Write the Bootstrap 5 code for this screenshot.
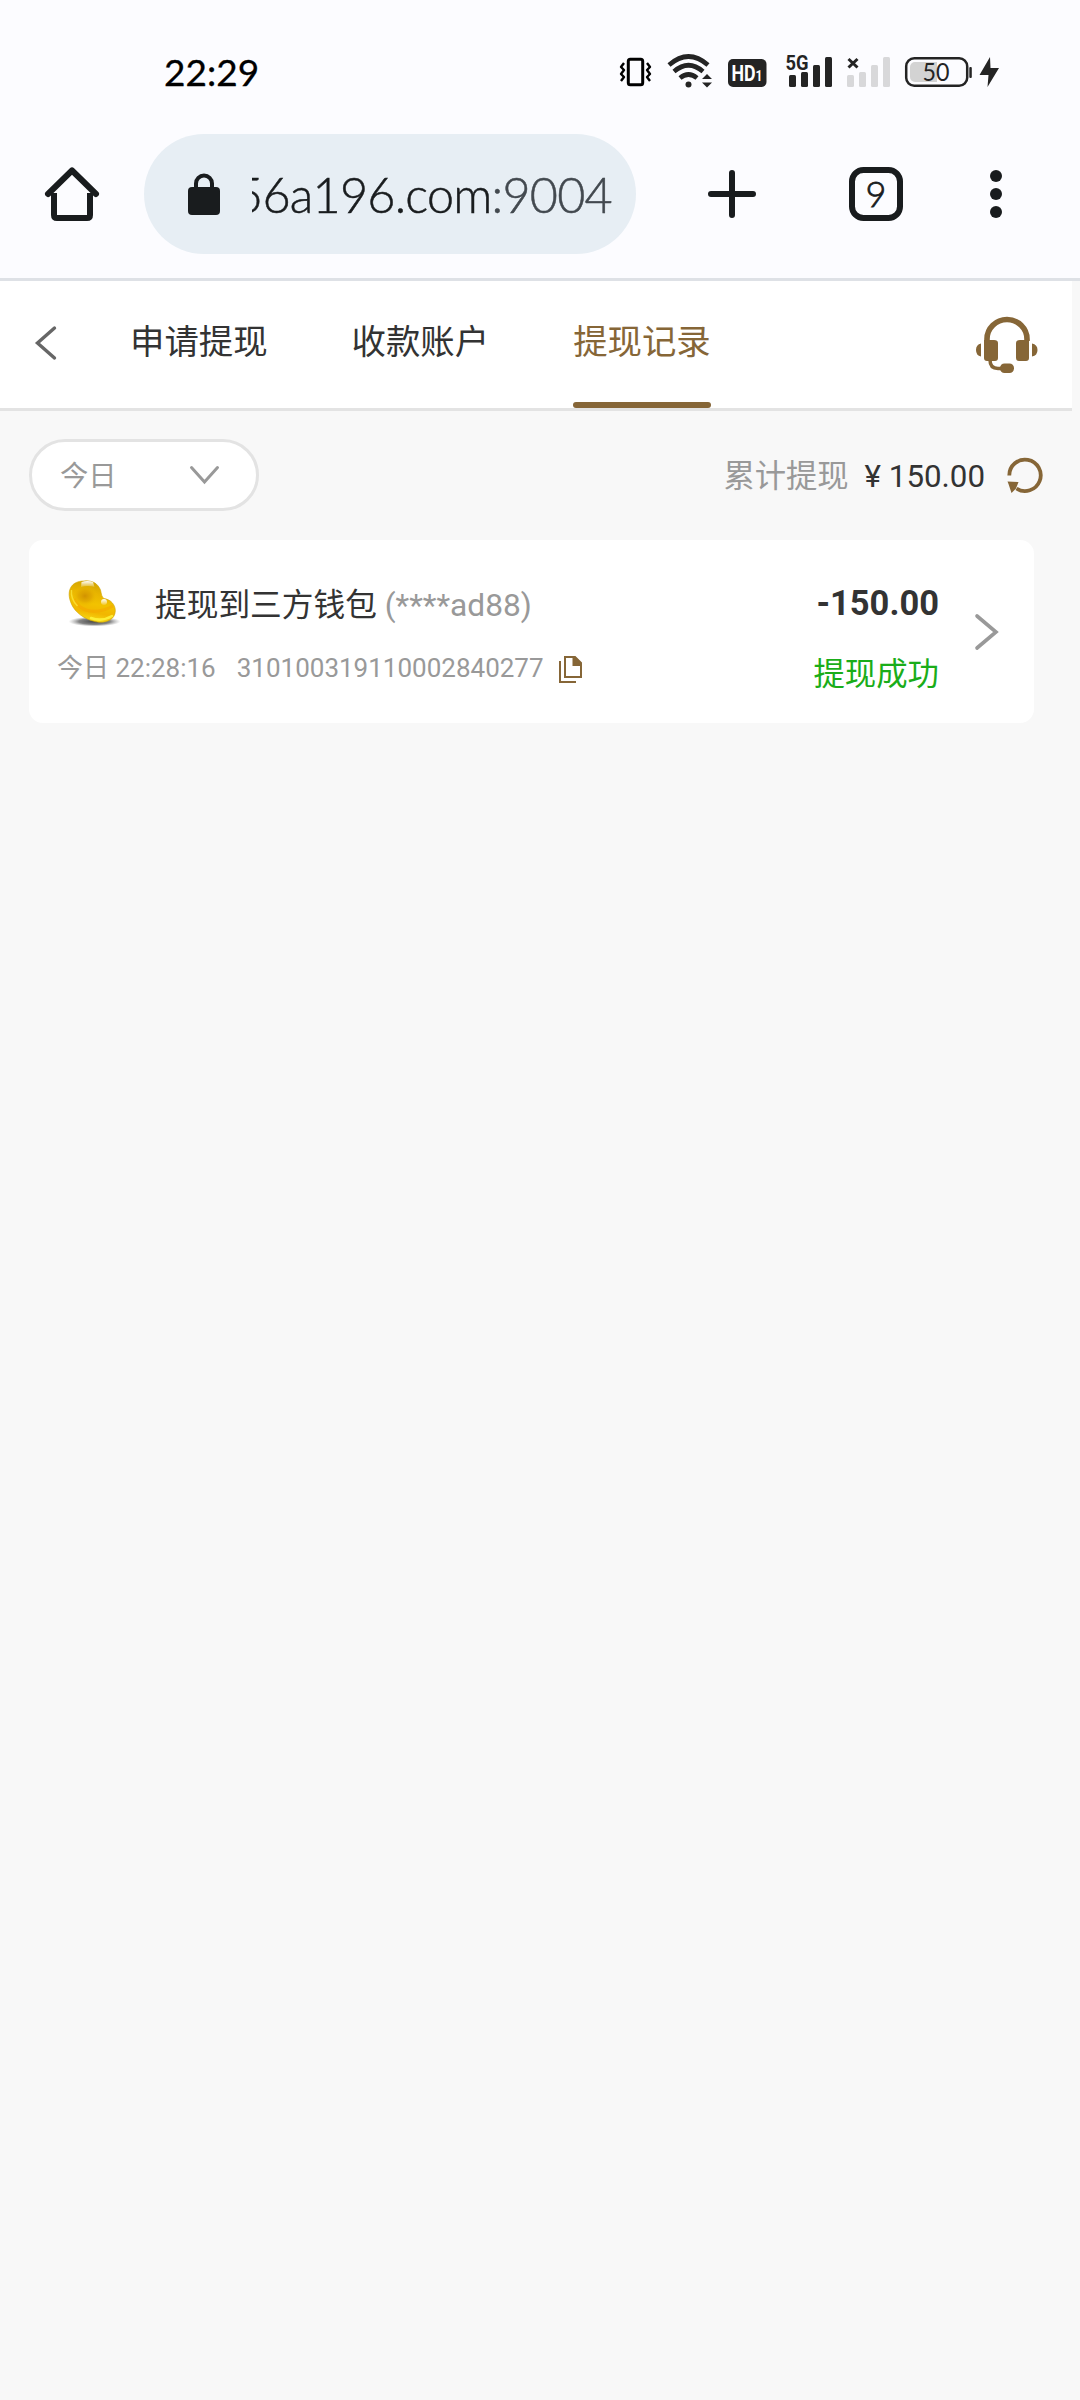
<!DOCTYPE html>
<html lang="zh-CN">
<head>
<meta charset="utf-8">
<meta name="viewport" content="width=device-width, initial-scale=1">
<title>提现记录</title>
<link href="https://cdn.jsdelivr.net/npm/bootstrap@5.3.0/dist/css/bootstrap.min.css" rel="stylesheet">
<style>
  body { background:#f8f8f8; min-height:2400px; font-family:Roboto,"Noto Sans CJK SC",sans-serif; color:#333; overflow-x:hidden; }
  svg { display:block; flex:none; overflow:visible; }
  .chrome-ui { background:#fcfcff; height:281px; border-bottom:3px solid #dee1e6; font-family:Lato,sans-serif; color:#191c1e; }
  .status-bar { height:134px; padding:54px 80px 0 164px; }
  .clock { font-size:37px; line-height:36px; color:#000; -webkit-text-stroke:.3px #000; }
  .url-row { height:120px; padding-left:45px; }
  .omnibox { width:492px; height:120px; border-radius:60px; background:#e7eef4; margin-left:45px; padding:0 24px 0 44px; }
  .url-text { width:361px; height:70px; margin-left:32px; font-size:48.5px; line-height:70px; font-weight:300; white-space:nowrap; letter-spacing:-.75px; -webkit-text-stroke:.5px currentColor; }
  .url-port { color:#43494f; }
  .page-wrap { width:1072px; }
  .tabs-bar { height:130px; background:#fff; border-bottom:3px solid #e3e3e3; padding:0 34px 0 36px; }
  .back-icon { margin-top:45px; }
  .service-icon { margin-top:36px; }
  .tab-item { font-size:34.4px; line-height:50px; height:127px; padding-top:36px; color:#333; text-decoration:none; }
  .tab-item::after { content:""; display:block; height:6px; margin-top:35px; border-radius:3px; }
  .tab-on { color:#866637; }
  .tab-on::after { background:#866637; }
  .tab-list { gap:84px; margin-left:73px; }
  .filter-row { padding:28px 30px 0 29px; height:129px; }
  .day-select { width:230px; height:72px; border:3px solid #e3e3e3; background:#fff; padding:0 37px 0 28px; color:#999; font-size:28.3px; }
  .day-select span { padding-top:4px; }
  .total-line { height:72px; font-size:31.3px; line-height:46px; color:#333; }
  .total-line span { padding-top:3px; }
  .dim { color:#999; }
  .record { width:1005px; height:183px; margin-left:29px; border:0; border-radius:14px; background:#fff; color:#333; padding:36px 36px 0 28px; }
  .rec-title { font-size:31.7px; line-height:46px; white-space:pre; margin-left:36px; padding-top:6px; }
  .rec-meta { font-size:26px; line-height:38px; color:#999; margin-top:19px; }
  .amount { font-size:34.5px; line-height:46px; font-weight:700; margin-top:4px; }
  .state-ok { font-size:31.4px; line-height:46px; color:#1aad19; margin-top:26px; }
</style>
<script src="https://cdn.jsdelivr.net/npm/bootstrap@5.3.0/dist/js/bootstrap.bundle.min.js"></script>
</head>
<body>
<header class="chrome-ui">
  <div class="status-bar d-flex align-items-start justify-content-between">
    <span class="clock">22:29</span>
    <div class="d-flex align-items-start">
      <svg width="48" height="36" viewBox="620 54 48 36" fill="none" stroke="#000" stroke-linejoin="round"><rect x="628.300" y="59.300" width="14.400" height="25.400" rx="2" stroke-width="3"/><path d="M624 63l-3 4 3 3-3 4 3 3-3 4M647 63l3 4-3 3 3 4-3 3 3 4" stroke-width="2.400"/></svg>
      <svg width="60" height="36" viewBox="668 54 60 36" fill="none" stroke="#242424" stroke-width="4.600"><path d="M669 65Q688.500 48 708 65M674 71.500Q688.500 59 703 71.500M680 78Q688.500 71 697 78"/><circle cx="688.500" cy="84.500" r="3" fill="#242424" stroke="none"/><path d="M702 79l5-5 5 5zM702 82.500l5 5 5-5z" fill="#242424" stroke="none"/></svg>
      <svg width="58" height="36" viewBox="728 54 58 36"><rect x="728" y="59" width="38.500" height="28" rx="5" fill="#242424"/><text x="731.500" y="81" font-family="Roboto" font-weight="700" font-size="22" fill="#fff" textLength="31" lengthAdjust="spacingAndGlyphs">HD<tspan font-size="15">1</tspan></text></svg>
      <svg width="61" height="36" viewBox="786 54 61 36" fill="#242424"><text x="785.500" y="70" font-family="Roboto" font-weight="700" font-size="20.500" textLength="23" lengthAdjust="spacingAndGlyphs">5G</text><rect x="789" y="75" width="7" height="12" rx="1.500"/><rect x="801" y="72" width="7" height="15" rx="1.500"/><rect x="813" y="65" width="7" height="22" rx="1.500"/><rect x="825" y="57" width="7" height="30" rx="1.500"/></svg>
      <svg width="58" height="36" viewBox="847 54 58 36" fill="#d8d8da"><path d="M848.500 59l9 8.500M857.500 59l-9 8.500" stroke="#242424" stroke-width="3"/><rect x="847" y="75" width="7" height="12" rx="1.500"/><rect x="859" y="72" width="7" height="15" rx="1.500"/><rect x="871" y="65" width="7" height="22" rx="1.500"/><rect x="883" y="57" width="7" height="30" rx="1.500"/></svg>
      <svg width="95" height="36" viewBox="905 54 95 36"><rect x="906.200" y="58.200" width="61" height="27.600" rx="8" fill="none" stroke="#242424" stroke-width="2.500"/><path d="M937 62v20h-22a5 5 0 0 1-5-5v-10a5 5 0 0 1 5-5z" fill="#d3d3d3"/><rect x="969.300" y="67" width="2.500" height="11" rx="1" fill="#242424"/><text x="922.500" y="81" font-family="Lato" font-size="25" fill="#242424" textLength="27" lengthAdjust="spacingAndGlyphs">50</text><path d="M990 57l-10.500 18h9l-1 12 11.500-19h-8.500z" fill="#242424"/></svg>
    </div>
  </div>
  <div class="url-row d-flex align-items-center">
    <svg width="54" height="54" viewBox="45 167 54 54" fill="none" stroke="#191c1e" stroke-linejoin="round" stroke-linecap="round"><path d="M54 193v22q0 3 3 3h30q3 0 3-3v-22" stroke-width="6" stroke-linecap="butt"/><path d="M48 194L72 170.500 96 194" stroke-width="6"/></svg>
    <div class="omnibox d-flex align-items-center">
      <svg width="32" height="42" viewBox="188 172 32 42"><rect x="188" y="186" width="32" height="28" rx="4" fill="#191c1e"/><path d="M196 188v-5.500a8 8 0 0 1 16 0v5.500" fill="none" stroke="#191c1e" stroke-width="4"/></svg>
      <div class="url-text d-flex justify-content-end overflow-hidden"><span>56a196.com</span><span class="url-port">:9004</span></div>
    </div>
    <svg style="margin-left:72px" width="48" height="48" viewBox="0 0 48 48"><path d="M24 3v42M3 24h42" stroke="#191c1e" stroke-width="6" stroke-linecap="round"/></svg>
    <svg style="margin-left:93px" width="54" height="54" viewBox="0 0 54 54"><rect x="3" y="3" width="48" height="48" rx="11.500" fill="none" stroke="#191c1e" stroke-width="6"/><text x="27" y="39.500" text-anchor="middle" font-family="Lato" font-weight="300" font-size="36" fill="#191c1e" stroke="#191c1e" stroke-width=".8">9</text></svg>
    <svg style="margin-left:87px" width="12" height="48" viewBox="0 0 12 48" fill="#191c1e"><circle cx="6" cy="6" r="6"/><circle cx="6" cy="24" r="6"/><circle cx="6" cy="42" r="6"/></svg>
  </div>
</header>
<main class="page-wrap">
  <nav class="tabs-bar d-flex align-items-start">
    <svg class="back-icon" width="21" height="34" viewBox="0 0 21 34"><path d="M18.500 2L1.500 17 18.500 32" fill="none" stroke="#666" stroke-width="3.400" stroke-linecap="round"/></svg>
    <div class="tab-list d-flex">
      <a class="tab-item">申请提现</a>
      <a class="tab-item">收款账户</a>
      <a class="tab-item tab-on">提现记录</a>
    </div>
    <svg class="service-icon ms-auto" width="62" height="55" viewBox="976 317 62 55" fill="#866637"><path d="M987 341v-2a20 19.500 0 0 1 40 0v2" fill="none" stroke="#866637" stroke-width="5.600"/><path d="M984 340h10q4 0 4 3v15q0 3-3 3h-8q-3 0-3-3zM1029 340h-9q-4 0-4 3v15q0 3 3 3h7q3 0 3-3zM981 343.500v13q-5-1-5-6.500t5-6.500zM1032 343.500v13q5.500-1 5.500-6.500t-5.500-6.500z"/><path d="M990 360q0 8.500 8 8.500h5" fill="none" stroke="#866637" stroke-width="3.500"/><rect x="1000" y="363.500" width="14" height="9.500" rx="4.500"/></svg>
  </nav>
  <section class="filter-row d-flex align-items-start justify-content-between">
    <div class="day-select rounded-pill d-flex align-items-center justify-content-between">
      <span>今日</span>
      <svg width="29" height="19" viewBox="0 0 29 19"><path d="M1.500 1.500L14.500 16 27.500 1.500" fill="none" stroke="#999" stroke-width="3" stroke-linecap="round"/></svg>
    </div>
    <div class="total-line d-flex align-items-center">
      <span class="dim">累计提现</span><span style="margin-left:16px">¥ 150.00</span>
      <svg style="margin-left:22px" width="35" height="36" viewBox="0 0 35 36"><path d="M2.300 18.500A15.700 15.700 0 1 1 9.500 31.500" fill="none" stroke="#866637" stroke-width="3.800"/><path d="M.5 24.500l11 .5-2.500 6.500-4.500 4.500-3-9z" fill="#866637"/></svg>
    </div>
  </section>
  <article class="record card d-flex flex-row align-items-start">
    <div>
      <div class="d-flex align-items-center">
        <svg width="62" height="54" viewBox="56 577 62 54">
          <defs>
            <linearGradient id="gold" x1=".6" y1="0" x2=".4" y2="1"><stop offset="0" stop-color="#cfa200"/><stop offset=".3" stop-color="#e8b400"/><stop offset=".55" stop-color="#f2c200"/><stop offset=".75" stop-color="#f2b600"/><stop offset="1" stop-color="#f7e21a"/></linearGradient>
            <radialGradient id="shade"><stop offset="0" stop-color="#444"/><stop offset=".6" stop-color="#666" stop-opacity=".8"/><stop offset="1" stop-color="#999" stop-opacity="0"/></radialGradient>
            <radialGradient id="core"><stop offset="0" stop-color="#d19200"/><stop offset=".5" stop-color="#dda300" stop-opacity=".7"/><stop offset="1" stop-color="#f0c000" stop-opacity="0"/></radialGradient>
            <linearGradient id="shine" x2="0" y2="1"><stop offset="0" stop-color="#fff"/><stop offset="1" stop-color="#fff" stop-opacity=".15"/></linearGradient>
          </defs>
          <ellipse cx="93.500" cy="622.500" rx="26" ry="5" fill="url(#shade)"/>
          <path d="M83 582C92 581 97 585 99.500 591C100.500 595 100.500 598 103 599.500C110 600.500 114.500 606 114.300 612C114 620 107 623.500 98 623.300C87 622 77 616 72 608C68 601 67 594 69.500 589C72 584 77 582 83 582Z" fill="url(#gold)" stroke="#cfa200" stroke-width=".6"/>
          <ellipse cx="84" cy="597" rx="13" ry="11" fill="url(#core)"/>
          <path d="M73 600Q77 608 85 611Q97 615 112 607" fill="none" stroke="#f5a300" stroke-width="3" opacity=".5"/>
          <path d="M70.500 591q-1 9 6 16" fill="none" stroke="#fbe53a" stroke-width="1.400" opacity=".8"/>
          <path d="M90 619q11 4 21-2" fill="none" stroke="#fff23a" stroke-width="2.600" stroke-linecap="round" opacity=".9"/>
          <path d="M80.500 583q6-2 11.500 0l1.500 5q-7-2-13.500 0z" fill="url(#shine)"/><ellipse cx="103" cy="603" rx="3" ry="3" fill="url(#shine)"/>
        </svg>
        <span class="rec-title">提现到三方钱包<span class="dim"> (****ad88)</span></span>
      </div>
      <div class="rec-meta d-flex align-items-center">
        <span>今日 22:28:16</span><span style="margin-left:21px">310100319110002840277</span>
        <svg style="margin:2px 0 0 15px" width="23" height="27" viewBox="0 0 23 27"><path d="M1 5v21h16" fill="none" stroke="#866637" stroke-width="2"/><path d="M6 1h10l6 6v14H6z" fill="none" stroke="#866637" stroke-width="2"/><path d="M13.500 1h3l5.500 6v3h-8.500z" fill="#866637"/></svg>
      </div>
    </div>
    <div class="ms-auto text-end">
      <div class="amount">-150.00</div>
      <div class="state-ok">提现成功</div>
    </div>
    <svg style="margin:38px 0 0 36px" width="23" height="36" viewBox="0 0 23 36"><path d="M2 2L21 18 2 34" fill="none" stroke="#999" stroke-width="3.600" stroke-linecap="round"/></svg>
  </article>
</main>
</body>
</html>
